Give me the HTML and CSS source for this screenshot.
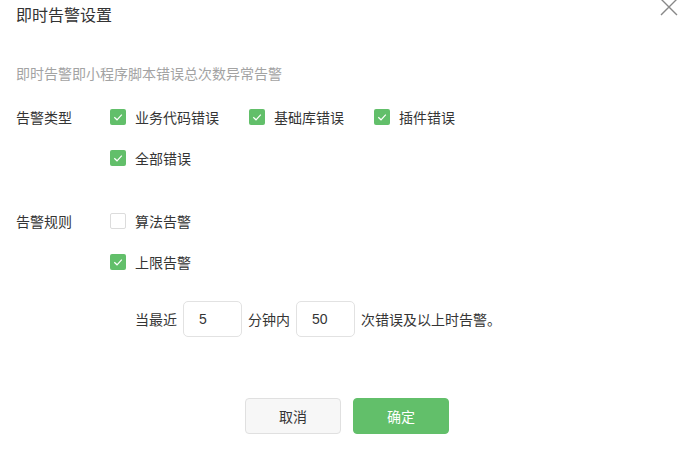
FILE: index.html
```html
<!DOCTYPE html>
<html lang="zh">
<head>
<meta charset="utf-8">
<link rel="stylesheet" href="styles.css">
</head>
<body>
<div class="dialog">
  <div class="header">
    <div class="title">即时告警设置</div>
    <button class="close" aria-label="关闭">
      <svg width="18" height="18" viewBox="0 0 18 18"><path d="M1 1L17 17M17 1L1 17" stroke="#888" stroke-width="1.4" fill="none"/></svg>
    </button>
  </div>
  <div class="desc">即时告警即小程序脚本错误总次数异常告警</div>

  <div class="field field-type">
    <div class="label">告警类型</div>
    <div class="options">
      <div class="opt-row">
        <label class="opt"><span class="cb on"><svg width="16" height="16" viewBox="0 0 16 16"><path d="M4.3 8.2L7 10.8L11.8 5.6" stroke="#fff" stroke-width="1.2" fill="none"/></svg></span>业务代码错误</label>
        <label class="opt"><span class="cb on"><svg width="16" height="16" viewBox="0 0 16 16"><path d="M4.3 8.2L7 10.8L11.8 5.6" stroke="#fff" stroke-width="1.2" fill="none"/></svg></span>基础库错误</label>
        <label class="opt"><span class="cb on"><svg width="16" height="16" viewBox="0 0 16 16"><path d="M4.3 8.2L7 10.8L11.8 5.6" stroke="#fff" stroke-width="1.2" fill="none"/></svg></span>插件错误</label>
      </div>
      <div class="opt-row">
        <label class="opt"><span class="cb on"><svg width="16" height="16" viewBox="0 0 16 16"><path d="M4.3 8.2L7 10.8L11.8 5.6" stroke="#fff" stroke-width="1.2" fill="none"/></svg></span>全部错误</label>
      </div>
    </div>
  </div>

  <div class="field field-rule">
    <div class="label">告警规则</div>
    <div class="options">
      <div class="opt-row">
        <label class="opt"><span class="cb"></span>算法告警</label>
      </div>
      <div class="opt-row">
        <label class="opt"><span class="cb on"><svg width="16" height="16" viewBox="0 0 16 16"><path d="M4.3 8.2L7 10.8L11.8 5.6" stroke="#fff" stroke-width="1.2" fill="none"/></svg></span>上限告警</label>
      </div>
      <div class="limit">
        <span>当最近</span>
        <input class="num" type="text" value="5">
        <span>分钟内</span>
        <input class="num" type="text" value="50">
        <span>次错误及以上时告警。</span>
      </div>
    </div>
  </div>

  <div class="footer">
    <button class="btn btn-default">取消</button>
    <button class="btn btn-primary">确定</button>
  </div>
</div>
</body>
</html>
```
FILE: styles.css
```css
html, body {
  margin: 0;
  padding: 0;
  background: #fff;
}
body {
  font-family: "Noto Sans CJK SC", "Noto Sans", sans-serif;
  color: #353535;
  font-size: 14px;
}
.dialog {
  width: 689px;
  height: 449px;
  overflow: hidden;
}
.header {
  display: flex;
  justify-content: space-between;
  align-items: flex-start;
  height: 28px;
  padding-left: 16px;
  padding-right: 11px;
}
.title {
  font-size: 16px;
  line-height: 28px;
  color: #333;
}
.close {
  border: 0;
  background: none;
  padding: 0;
  margin-top: -2px;
  width: 18px;
  height: 18px;
  cursor: pointer;
}
.close svg { display: block; }
.desc {
  margin-top: 35px;
  padding-left: 16px;
  line-height: 20px;
  font-size: 14px;
  color: #a3a3a3;
}
.field {
  display: flex;
  padding-left: 16px;
}
.field-type { margin-top: 26px; }
.field-rule { margin-top: 47px; }
.label {
  width: 94px;
  flex: none;
  line-height: 16px;
}
.options {
  display: flex;
  flex-direction: column;
  gap: 25px;
}
.opt-row {
  display: flex;
  height: 16px;
  align-items: center;
}
.opt {
  display: flex;
  align-items: center;
  line-height: 16px;
  margin-right: 30px;
}
.cb {
  width: 16px;
  height: 16px;
  box-sizing: border-box;
  border: 1px solid #dcdcdc;
  border-radius: 2px;
  margin-right: 9px;
  background: #fff;
  flex: none;
}
.cb.on {
  border: 0;
  background: #62bf6a;
}
.cb svg { display: block; }
.limit {
  display: flex;
  align-items: center;
  margin-top: 6px;
  padding-left: 25px;
  gap: 6px;
}
.num {
  width: 59px;
  height: 36px;
  box-sizing: border-box;
  border: 1px solid #e2e2e2;
  border-radius: 5px;
  padding: 0 0 0 15px;
  font-family: "Liberation Sans", Arial, sans-serif;
  font-size: 14px;
  color: #353535;
  outline: none;
}
.footer {
  display: flex;
  justify-content: center;
  gap: 12px;
  margin-top: 61px;
  padding-left: 5px;
}
.btn {
  width: 96px;
  height: 36px;
  box-sizing: border-box;
  border-radius: 4px;
  font-family: "Noto Sans CJK SC", sans-serif;
  font-size: 14px;
  cursor: pointer;
}
.btn-default {
  background: #f7f7f7;
  border: 1px solid #e0e0e0;
  color: #353535;
}
.btn-primary {
  background: #62bf6a;
  border: 1px solid #62bf6a;
  color: #fff;
}
```
